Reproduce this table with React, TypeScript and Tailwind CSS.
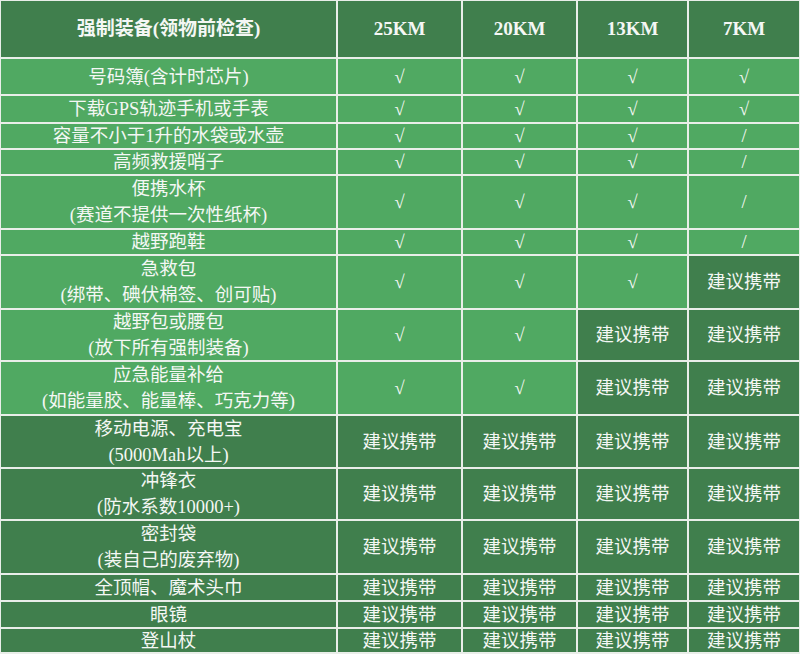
import React from "react";

type Cell = { t: string | string[]; dark?: boolean };

const C = "√";
const S = "/";
const R = "建议携带";

const rows: { name: string[]; dark: boolean; cells: Cell[] }[] = [
  { name: ["号码簿(含计时芯片)"], dark: false, cells: [{ t: C }, { t: C }, { t: C }, { t: C }] },
  { name: ["下载GPS轨迹手机或手表"], dark: false, cells: [{ t: C }, { t: C }, { t: C }, { t: C }] },
  { name: ["容量不小于1升的水袋或水壶"], dark: false, cells: [{ t: C }, { t: C }, { t: C }, { t: S }] },
  { name: ["高频救援哨子"], dark: false, cells: [{ t: C }, { t: C }, { t: C }, { t: S }] },
  { name: ["便携水杯", "(赛道不提供一次性纸杯)"], dark: false, cells: [{ t: C }, { t: C }, { t: C }, { t: S }] },
  { name: ["越野跑鞋"], dark: false, cells: [{ t: C }, { t: C }, { t: C }, { t: S }] },
  { name: ["急救包", "(绑带、碘伏棉签、创可贴)"], dark: false, cells: [{ t: C }, { t: C }, { t: C }, { t: R, dark: true }] },
  { name: ["越野包或腰包", "(放下所有强制装备)"], dark: false, cells: [{ t: C }, { t: C }, { t: R, dark: true }, { t: R, dark: true }] },
  { name: ["应急能量补给", "(如能量胶、能量棒、巧克力等)"], dark: false, cells: [{ t: C }, { t: C }, { t: R, dark: true }, { t: R, dark: true }] },
  { name: ["移动电源、充电宝", "(5000Mah以上)"], dark: true, cells: [{ t: R, dark: true }, { t: R, dark: true }, { t: R, dark: true }, { t: R, dark: true }] },
  { name: ["冲锋衣", "(防水系数10000+)"], dark: true, cells: [{ t: R, dark: true }, { t: R, dark: true }, { t: R, dark: true }, { t: R, dark: true }] },
  { name: ["密封袋", "(装自己的废弃物)"], dark: true, cells: [{ t: R, dark: true }, { t: R, dark: true }, { t: R, dark: true }, { t: R, dark: true }] },
  { name: ["全顶帽、魔术头巾"], dark: true, cells: [{ t: R, dark: true }, { t: R, dark: true }, { t: R, dark: true }, { t: R, dark: true }] },
  { name: ["眼镜"], dark: true, cells: [{ t: R, dark: true }, { t: R, dark: true }, { t: R, dark: true }, { t: R, dark: true }] },
  { name: ["登山杖"], dark: true, cells: [{ t: R, dark: true }, { t: R, dark: true }, { t: R, dark: true }, { t: R, dark: true }] },
];

export default function App() {
  return (
    <div className="w-[800px] h-[655px] bg-white">
      <div
        className="grid w-[800px] bg-[#e9eee9] gap-[2px] pt-[1px] pl-[1px] pr-[1px] pb-[2px] text-[#f4f7f4] grid-cols-[335px_123px_113px_109px_110px] grid-rows-[56px_35px_26px_24px_24px_52px_24px_52px_50px_52px_51px_50px_52px_25px_25px_23px]"
        style={{ fontFamily: '"Liberation Serif", "Noto Sans CJK SC", serif' }}
      >
        <div className="bg-[#407f4d] flex items-center justify-center text-[19px] font-bold">强制装备(领物前检查)</div>
        <div className="bg-[#407f4d] flex items-center justify-center text-[19px] font-bold">25KM</div>
        <div className="bg-[#407f4d] flex items-center justify-center text-[19px] font-bold">20KM</div>
        <div className="bg-[#407f4d] flex items-center justify-center text-[19px] font-bold">13KM</div>
        <div className="bg-[#407f4d] flex items-center justify-center text-[19px] font-bold">7KM</div>
        {rows.map((r, i) => (
          <React.Fragment key={i}>
            <div
              className={`${r.dark ? "bg-[#407f4d]" : "bg-[#50a962]"} flex flex-col items-center justify-center text-[18.5px] leading-[26px]`}
            >
              {r.name.map((n, j) => (
                <div key={j}>{n}</div>
              ))}
            </div>
            {r.cells.map((c, k) => (
              <div
                key={k}
                className={`${c.dark ? "bg-[#407f4d]" : "bg-[#50a962]"} flex items-center justify-center text-[18.5px] leading-[24px]`}
              >
                {c.t}
              </div>
            ))}
          </React.Fragment>
        ))}
      </div>
    </div>
  );
}
